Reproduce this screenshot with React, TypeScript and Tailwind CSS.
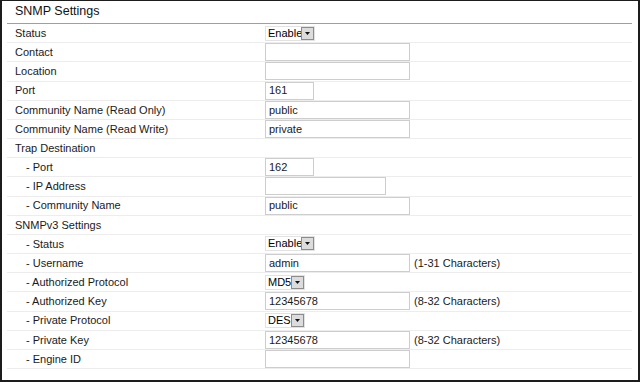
const font = { fontFamily: '"Liberation Sans", Arial, sans-serif' };

type Control =
  | { kind: "input"; value?: string; width: string; hint?: string }
  | { kind: "select"; value: string; width: string }
  | { kind: "none" };

type Row = { label: string; indent?: boolean; control: Control };

const rows: Row[] = [
  { label: "Status", control: { kind: "select", value: "Enable", width: "w-[50px]" } },
  { label: "Contact", control: { kind: "input", width: "w-[145px]" } },
  { label: "Location", control: { kind: "input", width: "w-[145px]" } },
  { label: "Port", control: { kind: "input", value: "161", width: "w-[49px]" } },
  { label: "Community Name (Read Only)", control: { kind: "input", value: "public", width: "w-[145px]" } },
  { label: "Community Name (Read Write)", control: { kind: "input", value: "private", width: "w-[145px]" } },
  { label: "Trap Destination", control: { kind: "none" } },
  { label: "- Port", indent: true, control: { kind: "input", value: "162", width: "w-[49px]" } },
  { label: "- IP Address", indent: true, control: { kind: "input", width: "w-[121px]" } },
  { label: "- Community Name", indent: true, control: { kind: "input", value: "public", width: "w-[145px]" } },
  { label: "SNMPv3 Settings", control: { kind: "none" } },
  { label: "- Status", indent: true, control: { kind: "select", value: "Enable", width: "w-[50px]" } },
  {
    label: "- Username",
    indent: true,
    control: { kind: "input", value: "admin", width: "w-[145px]", hint: "(1-31 Characters)" },
  },
  { label: "- Authorized Protocol", indent: true, control: { kind: "select", value: "MD5", width: "w-[40px]" } },
  {
    label: "- Authorized Key",
    indent: true,
    control: { kind: "input", value: "12345678", width: "w-[145px]", hint: "(8-32 Characters)" },
  },
  { label: "- Private Protocol", indent: true, control: { kind: "select", value: "DES", width: "w-[40px]" } },
  {
    label: "- Private Key",
    indent: true,
    control: { kind: "input", value: "12345678", width: "w-[145px]", hint: "(8-32 Characters)" },
  },
  { label: "- Engine ID", indent: true, control: { kind: "input", width: "w-[145px]" } },
];

function FakeSelect({ value, width }: { value: string; width: string }) {
  return (
    <div className={`flex h-[15px] items-stretch border border-[#e2e2e2] bg-white ${width}`}>
      <span className="min-w-0 flex-1 overflow-hidden whitespace-nowrap pl-[2px] text-[11px] leading-[13px] text-black">
        {value}
      </span>
      <span className="flex w-[13px] shrink-0 items-center justify-center border border-[#8c8c8c] bg-[#dcdcdc]">
        <svg width="5" height="3" viewBox="0 0 5 3">
          <path d="M0 0H5L2.5 3Z" fill="#111" />
        </svg>
      </span>
    </div>
  );
}

function FakeInput({ value, width }: { value?: string; width: string }) {
  return (
    <div
      className={`flex h-[18px] items-center border border-[#cdcdcd] bg-white pl-[3px] text-[11px] text-[#1a1a1a] ${width}`}
    >
      {value}
    </div>
  );
}

export default function App() {
  return (
    <div
      className="h-[382px] w-[640px] border-t border-r-2 border-b-2 border-l-2 border-[#1c1c1c] bg-white"
      style={font}
    >
      <div className="pl-[5px] pr-[6px]">
        <div className="flex h-[23px] items-center border-b border-[#8d9fd2] pb-[2px] pl-[8px] text-[12.5px] text-[#111]">
          SNMP Settings
        </div>
        {rows.map((row) => (
          <div
            key={row.label}
            className="flex h-[19.18px] items-center border-b border-[#ededed] text-[11px] text-[#1a1a1a]"
          >
            <div className={`w-[258px] shrink-0 ${row.indent ? "pl-[19px]" : "pl-[8px]"}`}>{row.label}</div>
            {row.control.kind === "input" && (
              <div className="flex items-center">
                <FakeInput value={row.control.value} width={row.control.width} />
                {row.control.hint && <span className="ml-[4px]">{row.control.hint}</span>}
              </div>
            )}
            {row.control.kind === "select" && (
              <FakeSelect value={row.control.value} width={row.control.width} />
            )}
          </div>
        ))}
      </div>
    </div>
  );
}
